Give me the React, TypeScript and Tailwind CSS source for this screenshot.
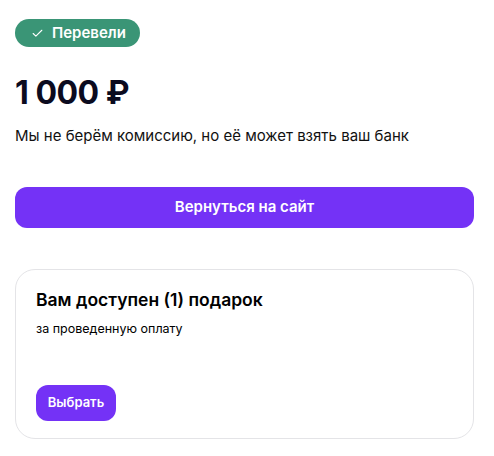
import { Check } from "lucide-react";

export default function App() {
  return (
    <div className="min-h-screen bg-white pl-[15px] pr-[20px] pt-[19px] font-['Inter',sans-serif] text-[#0a0a1a]">
      <div className="inline-flex h-[28px] items-center gap-[8px] rounded-full bg-[#3a9576] pl-[16px] pr-[14px] text-[15px] font-semibold text-white">
        <Check size={13} strokeWidth={2} />
        <span>Перевели</span>
      </div>

      <div className="mt-[26px] text-[32px] font-bold leading-[40px] tracking-[-0.5px] text-[#0b0b1f]">1 000 ₽</div>

      <p className="mt-[13px] text-[15px] leading-[20px] text-[#111]">
        Мы не берём комиссию, но её может взять ваш банк
      </p>

      <button className="mt-[41px] flex h-[41px] w-full items-center justify-center rounded-[12px] bg-[#7432f6] text-[15px] font-semibold text-white">
        Вернуться на сайт
      </button>

      <div className="mt-[41px] flex h-[170px] flex-col rounded-[20px] border border-[#e4e4e7] px-[20px] pt-[18px] pb-[17px]">
        <div className="text-[17.5px] font-semibold leading-[24px] text-black">Вам доступен (1) подарок</div>
        <div className="mt-[8px] text-[12.5px] leading-[18px] text-black">за проведенную оплату</div>
        <button className="mt-auto h-[36px] w-[80px] rounded-[12px] bg-[#7432f6] text-[13px] font-semibold text-white">
          Выбрать
        </button>
      </div>
    </div>
  );
}
